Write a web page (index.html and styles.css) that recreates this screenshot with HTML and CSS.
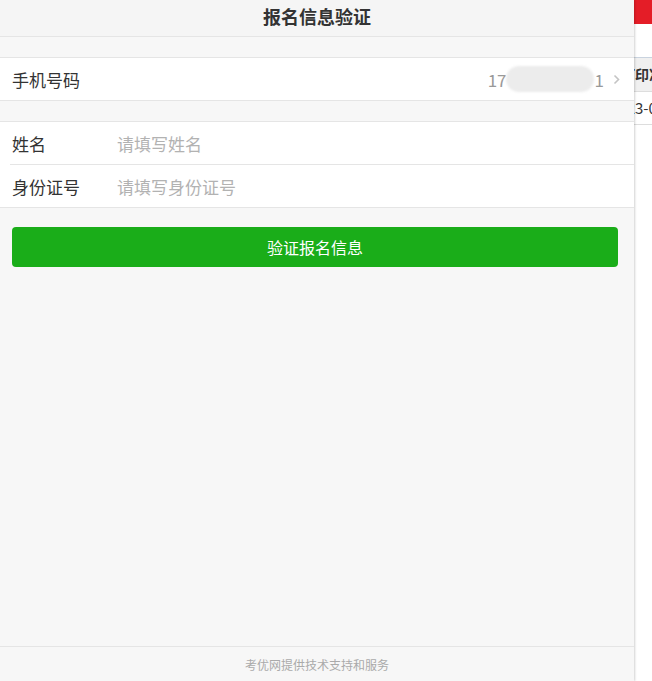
FILE: index.html
```html
<!DOCTYPE html>
<html>
<head>
<meta charset="UTF-8">
<meta name="viewport" content="width=device-width, initial-scale=1.0">
<title>报名信息验证</title>
<link rel="stylesheet" href="styles.css">
</head>
<body>
  <!-- 底层页面 -->
  <div class="page">
    <div class="page-bar"></div>
    <div class="page-table">
      <div class="page-head">打印准考证</div>
      <div class="page-cell">2023-05-10</div>
    </div>
  </div>

  <!-- 弹出面板 -->
  <div class="panel">
    <div class="title">报名信息验证</div>

    <div class="cells">
      <div class="cell">
        <div class="cell-label">手机号码</div>
        <div class="cell-value">17<span class="mask"></span>1</div>
        <svg class="arrow" width="7" height="11" viewBox="0 0 7 11">
          <polyline points="1.5,1.5 5.5,5.5 1.5,9.5" fill="none" stroke="#c4c4c4" stroke-width="1.6"/>
        </svg>
      </div>
    </div>

    <div class="cells">
      <div class="cell">
        <div class="cell-label">姓名</div>
        <input class="cell-input" type="text" placeholder="请填写姓名">
      </div>
      <div class="cell">
        <div class="cell-label">身份证号</div>
        <input class="cell-input" type="text" placeholder="请填写身份证号">
      </div>
    </div>

    <div class="btn-area">
      <button class="btn-primary">验证报名信息</button>
    </div>

    <div class="footer">考优网提供技术支持和服务</div>
  </div>
</body>
</html>
```

FILE: styles.css
```css
:root {
  --green: #1aad19;
  --line: #e5e5e5;
  --bg: #f7f7f7;
  --text: #333;
}

html, body {
  margin: 0;
  height: 100%;
}

body {
  font-family: "Noto Sans CJK SC", "Liberation Sans", sans-serif;
  background: #fff;
  color: var(--text);
  overflow: hidden;
  position: relative;
}

/* 底层页面 */
.page {
  height: 100%;
}

.page-bar {
  height: 24px;
  background: #e41d27;
}

.page-table {
  margin-top: 33px;
  border-top: 1px solid #c9d3df;
}

.page-head {
  height: 33px;
  line-height: 33px;
  padding-left: 621px;
  background: #f0f0f0;
  font-size: 14px;
  font-weight: bold;
  white-space: nowrap;
  border-bottom: 1px solid #ddd;
}

.page-cell {
  height: 32px;
  line-height: 32px;
  padding-left: 610px;
  font-size: 15px;
  white-space: nowrap;
  border-bottom: 1px solid #ddd;
}

/* 面板 */
.panel {
  position: absolute;
  top: 0;
  left: 0;
  bottom: 0;
  width: 634px;
  background: var(--bg);
  box-shadow: 1px 0 2px rgba(0,0,0,0.18);
  display: flex;
  flex-direction: column;
}

.title {
  height: 36px;
  line-height: 32px;
  text-align: center;
  font-size: 18px;
  font-weight: bold;
  background: #f5f5f5;
  border-bottom: 1px solid var(--line);
}

.cells {
  margin-top: 20px;
  background: #fff;
  border-top: 1px solid var(--line);
  border-bottom: 1px solid var(--line);
}

.cell {
  display: flex;
  align-items: center;
  height: 42px;
  padding: 0 12px;
  font-size: 17px;
}

.cell + .cell {
  border-top: 1px solid var(--line);
  margin-left: 10px;
  padding-left: 2px;
}

.cell-label {
  width: 105px;
  flex-shrink: 0;
}

.cell-value {
  flex: 1;
  color: #999;
  display: flex;
  justify-content: flex-end;
  align-items: center;
}

.mask {
  display: inline-block;
  width: 88px;
  height: 26px;
  margin: 0 1px 0 -1px;
  background: #ececec;
  border-radius: 13px;
  filter: blur(1px);
}

.arrow {
  margin-left: 9px;
  margin-right: 2px;
}

.cell-input {
  flex: 1;
  border: none;
  outline: none;
  padding: 0;
  font-family: inherit;
  font-size: 17px;
  color: var(--text);
  background: transparent;
}

.cell-input::placeholder {
  color: #b2b2b2;
}

.btn-area {
  padding: 19px 16px 0 12px;
}

.btn-primary {
  width: 100%;
  height: 40px;
  border: none;
  border-radius: 4px;
  background: var(--green);
  color: #fff;
  font-family: inherit;
  font-size: 16px;
  cursor: pointer;
}

.footer {
  margin-top: auto;
  height: 34px;
  line-height: 36px;
  border-top: 1px solid var(--line);
  text-align: center;
  font-size: 12px;
  color: #aaa;
}
```
